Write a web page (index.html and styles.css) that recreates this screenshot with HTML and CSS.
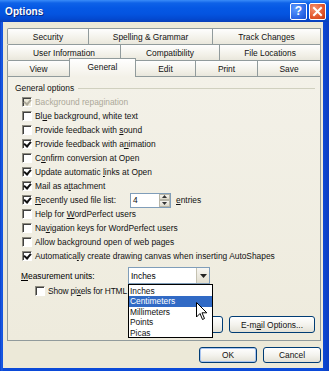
FILE: index.html
```html
<!DOCTYPE html>
<html>
<head>
<meta charset="utf-8">
<link rel="stylesheet" href="styles.css">
</head>
<body>
<div class="window">
  <div class="titlebar">
    <span class="title">Options</span>
    <div class="tb-buttons">
      <span class="tb-btn help">?</span>
      <span class="tb-btn close"><svg width="11" height="11" viewBox="0 0 11 11"><path d="M2 2 L9 9 M9 2 L2 9" stroke="#fff" stroke-width="2" stroke-linecap="square"/></svg></span>
    </div>
  </div>
  <div class="client">
    <div class="tabs">
      <div class="tabrow">
        <div class="tab w-security">Security</div>
        <div class="tab w-spelling">Spelling &amp; Grammar</div>
        <div class="tab w-track">Track Changes</div>
      </div>
      <div class="tabrow">
        <div class="tab w-user">User Information</div>
        <div class="tab w-compat">Compatibility</div>
        <div class="tab w-files">File Locations</div>
      </div>
      <div class="tabrow front">
        <div class="tab w-view">View</div>
        <div class="tab w-general selected">General</div>
        <div class="tab w-edit">Edit</div>
        <div class="tab w-print">Print</div>
        <div class="tab w-save">Save</div>
      </div>
    </div>
    <div class="panel">
      <div class="group-title"><span>General options</span><span class="rule"></span></div>
      <div class="row disabled"><span class="cb checked"></span><span>Background repagination</span></div>
      <div class="row"><span class="cb"></span><span>Bl<u>u</u>e background, white text</span></div>
      <div class="row"><span class="cb"></span><span>Provide feedback with <u>s</u>ound</span></div>
      <div class="row"><span class="cb checked"></span><span>Provide feedback with a<u>n</u>imation</span></div>
      <div class="row"><span class="cb"></span><span>C<u>o</u>nfirm conversion at Open</span></div>
      <div class="row"><span class="cb checked"></span><span>Update automatic <u>l</u>inks at Open</span></div>
      <div class="row"><span class="cb checked"></span><span>Mail as a<u>t</u>tachment</span></div>
      <div class="row"><span class="cb checked"></span><span class="recent-label"><u>R</u>ecently used file list:</span>
        <span class="spin"><span class="spin-val">4</span><span class="spin-btns"><span class="sb"><svg width="5" height="3" viewBox="0 0 5 3"><path d="M0 3 L2.5 0 L5 3Z" fill="#333"/></svg></span><span class="sb"><svg width="5" height="3" viewBox="0 0 5 3"><path d="M0 0 L2.5 3 L5 0Z" fill="#333"/></svg></span></span></span>
        <span class="entries"><u>e</u>ntries</span>
      </div>
      <div class="row"><span class="cb"></span><span>Help for <u>W</u>ordPerfect users</span></div>
      <div class="row"><span class="cb"></span><span>Na<u>v</u>igation keys for WordPerfect users</span></div>
      <div class="row"><span class="cb"></span><span>Allow background open of web pages</span></div>
      <div class="row"><span class="cb checked"></span><span>Automatica<u>l</u>ly create drawing canvas when inserting AutoShapes</span></div>
      <div class="measure">
        <span class="measure-label"><u>M</u>easurement units:</span>
        <div class="combo">
          <span class="combo-val">Inches</span>
          <span class="combo-btn"><svg width="7" height="4" viewBox="0 0 7 4"><path d="M0 0 L3.5 4 L7 0Z" fill="#222"/></svg></span>
          <div class="droplist">
            <div class="item">Inches</div>
            <div class="item hl">Centimeters</div>
            <div class="item">Millimeters</div>
            <div class="item">Points</div>
            <div class="item">Picas</div>
          </div>
        </div>
      </div>
      <div class="row pixels"><span class="cb"></span><span class="pixels-label">Show pi<u>x</u>els for HTML</span></div>
      <div class="panel-buttons">
        <span class="btn wide hidden-under"></span>
        <span class="btn wide">E-m<u>a</u>il Options...</span>
      </div>
    </div>
    <div class="footer">
      <span class="btn small default">OK</span>
      <span class="btn small">Cancel</span>
    </div>
  </div>
  <svg class="cursor" width="12" height="19" viewBox="0 0 12 19"><path d="M0.5 0.5 L0.5 15 L4 11.5 L6.5 17.5 L8.5 16.5 L6 10.8 L10.8 10.8 Z" fill="#fff" stroke="#000" stroke-width="1"/></svg>
</div>
</body>
</html>
```

FILE: styles.css
```css
* { box-sizing: border-box; }
html, body { margin: 0; padding: 0; }
body {
  width: 329px;
  height: 371px;
  overflow: hidden;
  font-family: "Liberation Sans", Arial, sans-serif;
  font-size: 8.4px;
  color: #000;
}
u { text-decoration: underline; text-underline-offset: 1px; }

.window {
  position: relative;
  width: 329px;
  height: 371px;
  background: linear-gradient(90deg, #0A3FC8 0px, #1C5FE8 2px, #0B4AD8 3px, #0B4AD8 322px, #0A3DC0 329px);
  display: flex;
  flex-direction: column;
  padding: 0 6px 3px 3px;
}

.titlebar {
  height: 22px;
  margin: 0 -6px 0 -3px;
  padding: 0 3px 0 5px;
  display: flex;
  align-items: center;
  justify-content: space-between;
  background: linear-gradient(#3A8CF8 0px, #0E62E8 3px, #0558E4 8px, #0454E0 14px, #0349D0 19px, #0A3FB8 22px);
}
.title {
  color: #fff;
  font-weight: bold;
  font-size: 10px;
  text-shadow: 1px 1px 0 #0A2A80;
  letter-spacing: 0.1px;
}
.tb-buttons { display: flex; gap: 2px; }
.tb-btn {
  width: 17px;
  height: 17px;
  border: 1px solid #fff;
  border-radius: 2px;
  display: flex;
  align-items: center;
  justify-content: center;
  color: #fff;
  font-weight: bold;
  font-size: 12px;
  font-family: "Liberation Sans", Arial, sans-serif;
}
.help { background: radial-gradient(circle at 30% 30%, #5C9BFF, #2663E4 70%, #1A4FCC); }
.close { background: radial-gradient(circle at 30% 30%, #F59270, #E2562C 60%, #C2380F); }

.client {
  flex: 1;
  background: #ECE9D8;
  padding: 6px 2px 0 4px;
  display: flex;
  flex-direction: column;
}

.tabs { display: flex; flex-direction: column; }
.tabrow { display: flex; height: 16px; }
.tabrow.front { align-items: flex-end; }
.tab {
  height: 16px;
  border: 1px solid #919B9C;
  border-bottom: none;
  margin-right: -1px;
  background: linear-gradient(#FEFEFE, #F1EFE6 70%, #E9E7DC);
  display: flex;
  align-items: center;
  justify-content: center;
  white-space: nowrap;
  color: #111;
}
.tabrow .tab:first-child { border-radius: 2px 0 0 0; }
.tab.selected {
  position: relative;
  z-index: 1;
  height: 19px;
  margin-bottom: -1px;
  margin-top: -2px;
  background: linear-gradient(#FFFFFF, #F3F1E8);
  padding-bottom: 2px;
}
.w-security { width: 82px; }
.w-spelling { width: 125px; }
.w-track { width: 109px; }
.w-user { width: 114px; }
.w-compat { width: 100px; }
.w-files { width: 102px; }
.w-view { width: 63px; }
.w-general { width: 67px; }
.w-edit { width: 61px; }
.w-print { width: 63px; }
.w-save { width: 64px; }

.panel {
  height: 265px;
  border: 1px solid #919B9C;
  background: linear-gradient(#F3F1E8, #EEEBDD);
  padding: 4px 5px 0 6px;
  display: flex;
  flex-direction: column;
}

.group-title {
  height: 14px;
  display: flex;
  align-items: center;
  color: #111;
  padding-left: 1px;
}
.group-title .rule {
  flex: 1;
  height: 0;
  border-top: 1px solid #D0D0BF;
  margin-left: 4px;
  margin-top: 1px;
}

.row {
  height: 14px;
  display: flex;
  align-items: center;
  padding-left: 8px;
  white-space: nowrap;
  color: #111;
}
.row.disabled { color: #ACA899; }
.cb {
  width: 10px;
  height: 10px;
  flex: none;
  margin-right: 3px;
  border: 1px solid;
  border-color: #8E8C80 #FFFFFF #FFFFFF #8E8C80;
  background: #fff;
  box-shadow: inset 1px 1px 0 #404040;
  position: relative;
}
.cb.checked::after {
  content: "";
  position: absolute;
  left: 2px;
  top: 0px;
  width: 3px;
  height: 5px;
  border: solid #111;
  border-width: 0 2px 2px 0;
  transform: rotate(40deg);
}
.row.disabled .cb { background: #ECE9D8; }
.row.disabled .cb.checked::after { border-color: #ACA899; }

.recent-label { width: 95px; }
.spin {
  width: 41px;
  height: 15px;
  border: 1px solid #7F9DB9;
  background: #fff;
  display: flex;
  align-items: center;
  padding-left: 2px;
  justify-content: space-between;
}
.spin-btns { display: flex; flex-direction: column; height: 13px; }
.sb {
  width: 11px;
  height: 6.5px;
  background: linear-gradient(#F6F5F0, #DEDACB);
  border: 1px solid #B8B6A8;
  display: flex;
  align-items: center;
  justify-content: center;
}
.entries { margin-left: 5px; }

.measure {
  margin-top: 4px;
  height: 17px;
  display: flex;
  align-items: center;
  padding-left: 7px;
}
.measure-label { width: 107px; }
.combo {
  position: relative;
  width: 82px;
  height: 17px;
  border: 1px solid #7F9DB9;
  background: #fff;
  display: flex;
  align-items: center;
  justify-content: space-between;
  padding-left: 2px;
}
.combo-btn {
  width: 13px;
  height: 15px;
  background: linear-gradient(#F7F6F2, #E2DECF);
  border-left: 1px solid #C5C2B2;
  display: flex;
  align-items: center;
  justify-content: center;
}
.droplist {
  position: absolute;
  z-index: 5;
  left: -1px;
  top: 16px;
  width: 85px;
  height: 54px;
  border: 1px solid #000;
  background: #fff;
  padding-top: 1px;
}
.item {
  height: 10.4px;
  line-height: 10.4px;
  padding-left: 1px;
  font-size: 8.4px;
  color: #111;
}
.item.hl { background: #316AC5; color: #fff; }

.row.pixels { padding-left: 21px; }
.pixels-label { letter-spacing: -0.15px; }

.panel-buttons {
  margin-top: 18px;
  display: flex;
  justify-content: flex-end;
  gap: 6px;
}
.btn {
  height: 17px;
  border: 1px solid #003C74;
  border-radius: 3px;
  background: linear-gradient(#FFFFFF, #F4F3EE 50%, #E3E1D6);
  display: flex;
  align-items: center;
  justify-content: center;
  color: #111;
  white-space: nowrap;
}
.btn.wide { width: 86px; }
.footer {
  margin-top: 6px;
  display: flex;
  justify-content: flex-end;
  gap: 6px;
}
.btn.small { width: 58px; height: 16px; }
.btn.default { box-shadow: inset 0 0 0 1px #A9C5F0; }

.cursor {
  position: absolute;
  left: 196px;
  top: 302px;
  z-index: 10;
}
```
